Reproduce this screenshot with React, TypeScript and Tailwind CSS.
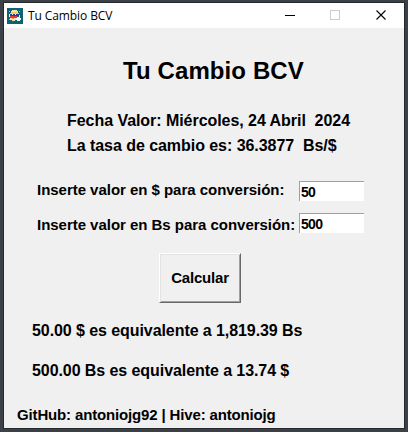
import React from "react";

function AppIcon() {
  return (
    <svg className="h-4 w-4 shrink-0" viewBox="0 0 16 16" shapeRendering="crispEdges">
      <rect width="16" height="16" fill="#0b6373" />
      <path d="M5 2h5v1h1v1H4V3h1z" fill="#e9e3c4" />
      <path d="M4 4h7v1h1v1H3V5h1z" fill="#f5cf4a" />
      <path d="M3 6h9v2H3z" fill="#1f3f94" />
      <path d="M3 8h7v2H3z" fill="#e0363a" />
      <path d="M2 6h1v3H2zM5 6h1v1H5zM8 6h1v1H8zM12 7h1v2h-1z" fill="#f4f2ee" />
      <path d="M3 10h6v2H8v1H5v-1H3z" fill="#f6dcbc" />
      <path d="M10 9h3v1h1v2h-1v1h-3v-1H9v-2h1z" fill="#eef6f6" />
      <path d="M12 3h1v1h-1zM2 11h1v1H2zM2 3h1v1H2z" fill="#8fc3cb" />
      <path d="M5 10h2v1H5z" fill="#e09a3c" />
    </svg>
  );
}

function TitleBar() {
  return (
    <div className="flex h-[25px] items-center bg-white pl-[3px]">
      <AppIcon />
      <span className="ml-[5px] whitespace-pre font-['Open_Sans','Noto_Sans',sans-serif] text-[12px] leading-[24px] font-normal tracking-[-0.1px] text-black">
        Tu Cambio BCV
      </span>
      <svg className="ml-auto mr-[17px] h-[11px] w-[102px]" viewBox="0 0 102 11" fill="none" shapeRendering="crispEdges">
        <path d="M0 5.5h10" stroke="#000" />
        <rect x="45.5" y="0.5" width="9" height="9" stroke="#ccc" />
        <path d="M91.5 0.5l9 9M100.5 0.5l-9 9" stroke="#000" strokeWidth="1.1" shapeRendering="auto" />
      </svg>
    </div>
  );
}

function Entry({ value, className }: { value: string; className: string }) {
  return (
    <input
      type="text"
      defaultValue={value}
      className={
        "block h-5 w-[65px] rounded-none border-t border-l border-[#a0a0a0] bg-white pl-px font-['Liberation_Sans',Arial,sans-serif] text-[14px] leading-[18px] font-bold tracking-[-0.7px] text-black outline-none " +
        className
      }
    />
  );
}

export default function App() {
  return (
    <div className="h-[432px] w-[408px] overflow-hidden bg-[#3b4146] pt-[2px] pl-[3px] font-['Liberation_Sans',Arial,sans-serif] font-bold text-black">
      <div className="h-[427px] w-[402px] border border-[#25292c]">
        <TitleBar />
        <main className="h-[400px] bg-[#f0f0f0] pt-[27px]">
          <h1 className="ml-[119px] h-8 whitespace-pre text-[24px] leading-[32px] tracking-[0.1px]">Tu Cambio BCV</h1>
          <div className="mt-6 ml-[63px] whitespace-pre text-[16px] tracking-[-0.05px]">
            <p className="h-5 leading-[20px]">Fecha Valor: Miércoles, 24 Abril  2024</p>
            <p className="mt-[5px] h-5 leading-[20px]">La tasa de cambio es: 36.3877  Bs/$</p>
          </div>
          <div className="mt-6 flex h-[55px] whitespace-pre text-[15px]">
            <div className="ml-[33px] w-[262px] tracking-[-0.03px]">
              <p className="h-5 leading-[20px]">Inserte valor en $ para conversión:</p>
              <p className="mt-[15px] h-5 leading-[20px]">Inserte valor en Bs para conversión:</p>
            </div>
            <div>
              <Entry value="50" className="mt-px" />
              <Entry value="500" className="mt-3" />
            </div>
          </div>
          <button className="mt-[18px] ml-[155px] block h-[50px] w-[82px] border border-t-white border-r-[#696969] border-b-[#696969] border-l-white p-0 text-[15px] leading-[20px] font-bold tracking-[-0.2px] shadow-[inset_1px_1px_0_#e3e3e3,inset_-1px_-1px_0_#a0a0a0]">
            Calcular
          </button>
          <div className="mt-[18px] ml-7 whitespace-pre text-[16px] tracking-[-0.075px]">
            <p className="h-5 leading-[20px]">50.00 $ es equivalente a 1,819.39 Bs</p>
            <p className="mt-5 h-5 leading-[20px]">500.00 Bs es equivalente a 13.74 $</p>
          </div>
          <p className="mt-6 ml-[13px] h-5 whitespace-pre text-[15px] leading-[20px] tracking-[-0.15px]">
            GitHub: antoniojg92 | Hive: antoniojg
          </p>
        </main>
      </div>
    </div>
  );
}
